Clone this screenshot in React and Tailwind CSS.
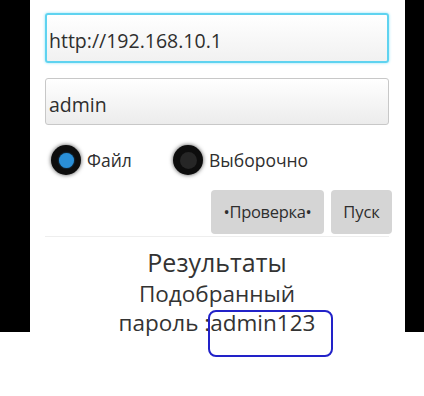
import React from 'react';

const Radio = ({ checked, label }) => (
  <div className="flex items-center">
    <div className="w-[30px] h-[30px] rounded-full bg-[#0d0d0d] flex items-center justify-center shadow-[0_0_4px_rgba(0,0,0,0.7)]">
      {checked ? (
        <div className="w-[15px] h-[15px] rounded-full bg-[#2a8fd8] shadow-[0_0_2px_#1b6fb0]" />
      ) : (
        <div className="w-[17px] h-[17px] rounded-full bg-[#262626]" />
      )}
    </div>
    <span className="ml-[6px] text-[17.5px] text-[#2e2e2e]">{label}</span>
  </div>
);

const App = () => {
  return (
    <div
      className="relative w-[424px] h-[396px] bg-white overflow-hidden"
      style={{ fontFamily: '"Open Sans", "Liberation Sans", sans-serif' }}
    >
      <div className="flex h-[332px]">
        <div className="w-[30px] bg-black" />
        <div className="w-[375px] bg-white pl-[15px] pr-[16px] pt-[13px] flex flex-col">
          {/* URL field */}
          <div className="shrink-0 h-[50px] rounded-[3px] border-2 border-[#5fd3f0] shadow-[0_0_3px_#8fe3f7] bg-gradient-to-b from-white to-[#f1f1f1] flex items-center px-[2px]">
            <span className="text-[19.5px] text-[#2e2e2e] mt-[6px]">http://192.168.10.1</span>
          </div>

          {/* Login field */}
          <div className="shrink-0 mt-[15px] h-[47px] rounded-[3px] border border-[#c8c8c8] bg-gradient-to-b from-white to-[#ececec] flex items-center px-[3px]">
            <span className="text-[19.5px] text-[#2e2e2e] mt-[6px]">admin</span>
          </div>

          {/* Mode */}
          <div className="shrink-0 mt-[20px] h-[30px] flex items-center pl-[6px]">
            <div className="w-[122px]">
              <Radio checked label="Файл" />
            </div>
            <Radio label="Выборочно" />
          </div>

          {/* Buttons */}
          <div className="shrink-0 mt-[15px] flex justify-end gap-[7px] mr-[-3px]">
            <div className="w-[113px] h-[44px] rounded-[4px] bg-[#d5d5d5] flex items-center justify-center text-[16.5px] tracking-[-0.3px] text-[#2e2e2e]">
              •Проверка•
            </div>
            <div className="w-[61px] h-[44px] rounded-[4px] bg-[#d5d5d5] flex items-center justify-center text-[16.5px] text-[#2e2e2e]">
              Пуск
            </div>
          </div>
          <div className="shrink-0 mt-[2px] h-px bg-[#eeeeee]" />

          {/* Results */}
          <div className="shrink-0 flex flex-col items-center text-[#333] mt-[10px]">
            <div className="text-[25px] leading-[30px]">Результаты</div>
            <div className="text-[22.5px] leading-[30px] mt-[2px]">Подобранный</div>
            <div className="text-[22.5px] leading-[28px]">пароль :admin123</div>
          </div>
        </div>
        <div className="flex-1 bg-black" />
      </div>

      <div className="absolute left-[208px] top-[310px] w-[125px] h-[47px] rounded-[8px] border-2 border-[#2222c8]" />
    </div>
  );
};

export default App;
